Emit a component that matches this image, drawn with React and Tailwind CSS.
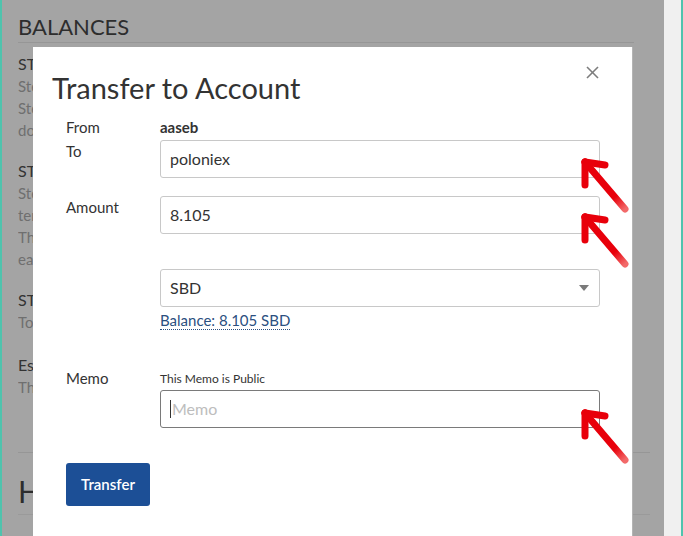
import React from "react";

const font = { fontFamily: "Lato, 'Open Sans', sans-serif" };

const Arrow = ({ top }) => (
  <svg
    className="absolute left-[575px]"
    style={{ top }}
    width="60"
    height="62"
    viewBox="0 0 60 62"
  >
    <defs>
      <linearGradient id={`fade${top}`} x1="10" y1="5" x2="50" y2="52" gradientUnits="userSpaceOnUse">
        <stop offset="0.75" stopColor="#e8000b" />
        <stop offset="1" stopColor="#f26a6a" />
      </linearGradient>
    </defs>
    <g strokeWidth="7" strokeLinecap="round" fill="none">
      <line x1="10" y1="5" x2="50" y2="52" stroke={`url(#fade${top})`} />
      <line x1="10" y1="5" x2="30" y2="8" stroke="#e8000b" />
      <line x1="10" y1="5" x2="10" y2="28" stroke="#e8000b" />
    </g>
  </svg>
);

const BgBlock = ({ title, lines }) => (
  <div>
    <div className="text-[16px] leading-[22px] text-[#333] whitespace-nowrap">{title}</div>
    {lines.map((l) => (
      <div key={l} className="text-[15px] leading-[22px] text-[#6f6f6f] whitespace-nowrap">
        {l}
      </div>
    ))}
  </div>
);

export default function App() {
  return (
    <div
      className="relative w-[683px] h-[536px] overflow-hidden flex bg-[#a4a4a4]"
      style={font}
    >
      <div className="w-[2px] bg-[#4fc3ad]" />
      {/* page behind the modal */}
      <div className="flex-1 px-[16px] pt-[12px] overflow-hidden">
        <div className="text-[22px] leading-[30px] text-[#2d2d2d]">BALANCES</div>
        <div className="h-px bg-[#969696] w-[616px]" />
        <div className="mt-[10px] w-[17px] overflow-hidden">
          <BgBlock
            title="STEEM"
            lines={[
              "Steem tokens may be transferred anywhere at anytime.",
              "Steem can be converted to STEEM POWER in a process called powering up.",
              "does not pay interest",
            ]}
          />
          <div className="mt-[19px]">
            <BgBlock
              title="STEEM POWER"
              lines={[
                "Steem Power is an influence token that gives you more control over",
                "term rewards and influence on curation.",
                "The STEEM POWER balance is growing.",
                "earns interest",
              ]}
            />
          </div>
          <div className="mt-[19px]">
            <BgBlock title="STEEM DOLLARS" lines={["Tokens worth about $1.00 of STEEM"]} />
          </div>
          <div className="mt-[21px]">
            <BgBlock title="Estimated Account Value" lines={["The estimated value is based on an average value of Steem in US dollars."]} />
          </div>
        </div>
        <div className="h-px bg-[#969696] mt-[54px] w-[632px]" />
        <div className="mt-[20px] w-[17px] overflow-hidden">
          <div className="text-[30px] leading-[36px] text-[#2d2d2d] whitespace-nowrap">HISTORY</div>
        </div>
        <div className="h-px bg-[#9a9a9a] mt-[5px] w-[632px]" />
      </div>
      <div className="w-[17px] bg-[#f0f0f0]" />
      <div className="w-[2px] bg-[#4fc3ad]" />

      {/* modal */}
      <div className="absolute left-[33px] top-[47px] w-[599px] h-[500px] bg-white shadow-[1px_0_0_#b4b4b4]">
        <svg className="absolute left-[553px] top-[19px]" width="13" height="13" viewBox="0 0 13 13">
          <g stroke="#7d7d7d" strokeWidth="1.6">
            <line x1="1" y1="1" x2="12" y2="12" />
            <line x1="12" y1="1" x2="1" y2="12" />
          </g>
        </svg>
        <h1 className="ml-[19px] mt-[23px] text-[29px] leading-[36px] text-[#333] font-normal">
          Transfer to Account
        </h1>
        <div className="ml-[33px] mt-[11px] grid grid-cols-[94px_440px] text-[15px] text-[#333]">
          <div className="leading-[20px]">From</div>
          <div className="leading-[20px] font-bold">aaseb</div>

          <div className="mt-[3px] pt-[1px] leading-[20px]">To</div>
          <div className="mt-[3px] h-[38px] border border-[#c8c8c8] rounded-[3px] px-[9px] flex items-center text-[16px]">
            poloniex
          </div>

          <div className="mt-[18px] pt-[1px] leading-[20px]">Amount</div>
          <div className="mt-[18px] h-[38px] border border-[#c8c8c8] rounded-[3px] px-[9px] flex items-center text-[16px]">
            8.105
          </div>

          <div />
          <div className="mt-[35px] h-[38px] border border-[#c8c8c8] rounded-[3px] px-[9px] flex items-center justify-between text-[16px]">
            <span>SBD</span>
            <svg width="10" height="6" viewBox="0 0 10 6" className="mr-[1px]">
              <path d="M0 0 L10 0 L5 6 Z" fill="#7a7a7a" />
            </svg>
          </div>

          <div />
          <div className="mt-[3px] leading-[20px]">
            <span className="text-[#2b4f80] border-b border-dotted border-[#2b4f80]">Balance: 8.105 SBD</span>
          </div>

          <div className="mt-[38px] leading-[20px]">Memo</div>
          <div className="mt-[41px]">
            <div className="text-[12px] leading-[16px] text-[#333]">This Memo is Public</div>
            <div className="mt-[3px] h-[38px] border border-[#7a7a7a] rounded-[3px] px-[9px] flex items-center text-[16px] text-[#bdbdbd]">
              <span className="w-px h-[18px] bg-[#333] mr-[1px]" />
              Memo
            </div>
          </div>
        </div>
        <button className="ml-[33px] mt-[35px] w-[84px] h-[43px] rounded-[3px] bg-[#1c4f96] text-white text-[15px] font-semibold">
          Transfer
        </button>
      </div>

      <Arrow top={157} />
      <Arrow top={212} />
      <Arrow top={408} />
    </div>
  );
}
